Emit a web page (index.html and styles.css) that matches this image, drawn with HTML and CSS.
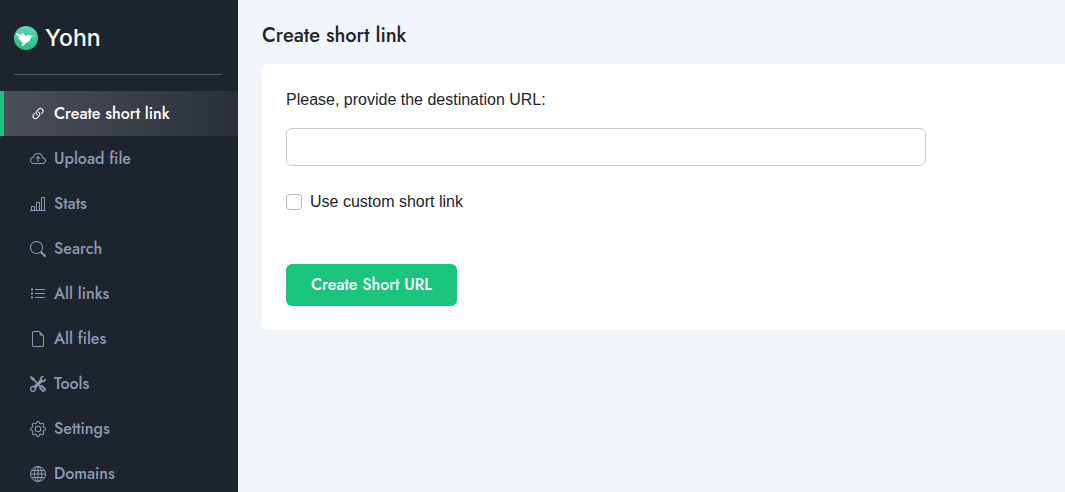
FILE: index.html
```html
<!DOCTYPE html>
<html lang="en">
<head>
    <meta charset="UTF-8">
    <meta name="viewport" content="width=device-width, initial-scale=1">
    <title>Yohn - Create short link</title>
    <link rel="stylesheet" href="styles.css">
</head>
<body>
    <aside class="sidebar">
        <a class="brand" href="#">
            <svg class="brand-logo" viewBox="0 0 24 24" aria-hidden="true">
                <defs>
                    <linearGradient id="logo-bg" x1="0" y1="0" x2="0" y2="1">
                        <stop offset="0" stop-color="#62d2b8"/>
                        <stop offset="1" stop-color="#1bc47d"/>
                    </linearGradient>
                </defs>
                <circle cx="12" cy="12" r="12" fill="url(#logo-bg)"/>
                <path fill="#fff" d="M2 6.8C4.3 8 6.5 8.600 8.500 9.500C7.900 8.500 7.500 7.600 7.600 6.700C9.600 7.600 11.200 9 12.300 10.700C13 9.400 14.200 8.900 15.400 9.200C16.100 9.400 16.500 9.700 17 9.800L22 9.800L17.600 10.500C17 11 16.900 12 16.500 13C15.800 14.900 14.200 16.200 12.300 16.700C11.600 17.500 10.600 18.700 9.300 19.700C8.700 19.500 8 19.400 7.400 19.500C7.900 18.400 8.300 17.200 8.600 16.100C7.300 15.800 6.500 15.300 6 14.600C6.700 14.600 7.200 14.500 7.700 14.200C5.700 13.900 4.500 13 3.900 11.900C4.700 12 5.300 12 6 11.800C3.600 10.800 2.200 9.200 2 6.800Z"/>
            </svg>
            <span>Yohn</span>
        </a>
        <nav class="menu">
            <a class="menu-item active" href="#">
                <svg viewBox="0 0 16 16" aria-hidden="true"><path d="M4.715 6.542 3.343 7.914a3 3 0 1 0 4.243 4.243l1.828-1.829A3 3 0 0 0 8.586 5.500L8 6.086a1 1 0 0 0-.154.199 2 2 0 0 1 .861 3.337L6.880 11.450a2 2 0 1 1-2.830-2.830l.793-.792a4 4 0 0 1-.128-1.287z"/><path d="M6.586 4.672A3 3 0 0 0 7.414 9.500l.775-.776a2 2 0 0 1-.896-3.346L9.120 3.550a2 2 0 1 1 2.830 2.830l-.793.792c.112.420.155.855.128 1.287l1.372-1.372a3 3 0 1 0-4.243-4.243z"/></svg>
                <span>Create short link</span>
            </a>
            <a class="menu-item" href="#">
                <svg viewBox="0 0 16 16" aria-hidden="true"><path d="M7.646 5.146a.5.5 0 0 1 .708 0l2 2a.5.5 0 0 1-.708.708L8.500 6.707V10.500a.5.5 0 0 1-1 0V6.707L6.354 7.854a.5.5 0 1 1-.708-.708z"/><path d="M4.406 3.342A5.530 5.530 0 0 1 8 2c2.690 0 4.923 2 5.166 4.579C14.758 6.804 16 8.137 16 9.773 16 11.569 14.502 13 12.687 13H3.781C1.708 13 0 11.366 0 9.318c0-1.763 1.266-3.223 2.942-3.593.143-.863.698-1.723 1.464-2.383m.653.757c-.757.653-1.153 1.440-1.153 2.056v.448l-.445.049C2.064 6.805 1 7.952 1 9.318 1 10.785 2.230 12 3.781 12h8.906C13.980 12 15 10.988 15 9.773c0-1.216-1.020-2.228-2.313-2.228h-.5v-.5C12.188 4.825 10.328 3 8 3a4.530 4.530 0 0 0-2.941 1.100z"/></svg>
                <span>Upload file</span>
            </a>
            <a class="menu-item" href="#">
                <svg viewBox="0 0 16 16" aria-hidden="true"><path d="M11 2a1 1 0 0 1 1-1h2a1 1 0 0 1 1 1v12h.5a.5.5 0 0 1 0 1H.5a.5.5 0 0 1 0-1H1v-3a1 1 0 0 1 1-1h2a1 1 0 0 1 1 1v3h1V7a1 1 0 0 1 1-1h2a1 1 0 0 1 1 1v7h1zm1 12h2V2h-2zm-3 0V7H7v7zm-5 0v-3H2v3z"/></svg>
                <span>Stats</span>
            </a>
            <a class="menu-item" href="#">
                <svg viewBox="0 0 16 16" aria-hidden="true"><path d="M11.742 10.344a6.500 6.500 0 1 0-1.397 1.398h-.001q.044.060.098.115l3.850 3.850a1 1 0 0 0 1.415-1.414l-3.850-3.850a1 1 0 0 0-.115-.1zM12 6.500a5.500 5.500 0 1 1-11 0 5.500 5.500 0 0 1 11 0"/></svg>
                <span>Search</span>
            </a>
            <a class="menu-item" href="#">
                <svg viewBox="0 0 16 16" aria-hidden="true"><path d="M5.500 3h9a.5.5 0 0 1 0 1h-9a.5.5 0 0 1 0-1zm0 4h9a.5.5 0 0 1 0 1h-9a.5.5 0 0 1 0-1zm0 4h9a.5.5 0 0 1 0 1h-9a.5.5 0 0 1 0-1zM1 2.500h2v2H1zm0 4h2v2H1zm0 4h2v2H1z"/></svg>
                <span>All links</span>
            </a>
            <a class="menu-item" href="#">
                <svg viewBox="0 0 16 16" aria-hidden="true"><path d="M14 4.500V14a2 2 0 0 1-2 2H4a2 2 0 0 1-2-2V2a2 2 0 0 1 2-2h5.500zm-3 0A1.500 1.500 0 0 1 9.500 3V1H4a1 1 0 0 0-1 1v12a1 1 0 0 0 1 1h8a1 1 0 0 0 1-1V4.500z"/></svg>
                <span>All files</span>
            </a>
            <a class="menu-item" href="#">
                <svg class="bold" viewBox="0 0 16 16" aria-hidden="true"><path d="M1 0 0 1l2.200 3.081a1 1 0 0 0 .815.419h.070a1 1 0 0 1 .708.293l2.675 2.675-2.617 2.654A3.003 3.003 0 0 0 0 13a3 3 0 1 0 5.878-.851l2.654-2.617.968.968-.305.914a1 1 0 0 0 .242 1.023l3.270 3.270a.997.997 0 0 0 1.414 0l1.586-1.586a.997.997 0 0 0 0-1.414l-3.270-3.270a1 1 0 0 0-1.023-.242L10.500 9.500l-.960-.960 2.680-2.643A3.005 3.005 0 0 0 16 3q0-.405-.102-.777l-2.140 2.141L12 4l-.364-1.757L13.777.102a3 3 0 0 0-3.675 3.680L7.462 6.460 4.793 3.793a1 1 0 0 1-.293-.707v-.071a1 1 0 0 0-.419-.814zm9.646 10.646a.5.5 0 0 1 .708 0l2.914 2.915a.5.5 0 0 1-.707.707l-2.915-2.914a.5.5 0 0 1 0-.708M3 11l.471.242.529.026.287.445.445.287.026.529L5 13l-.242.471-.026.529-.445.287-.287.445-.529.026L3 15l-.471-.242L2 14.732l-.287-.445L1.268 14l-.026-.529L1 13l.242-.471.026-.529.445-.287.287-.445.529-.026z"/></svg>
                <span>Tools</span>
            </a>
            <a class="menu-item" href="#">
                <svg viewBox="0 0 16 16" aria-hidden="true"><path d="M8 4.754a3.246 3.246 0 1 0 0 6.492 3.246 3.246 0 0 0 0-6.492M5.754 8a2.246 2.246 0 1 1 4.492 0 2.246 2.246 0 0 1-4.492 0"/><path d="M9.796 1.343c-.527-1.790-3.065-1.790-3.592 0l-.094.319a.873.873 0 0 1-1.255.520l-.292-.160c-1.640-.892-3.433.902-2.540 2.541l.159.292a.873.873 0 0 1-.520 1.255l-.319.094c-1.790.527-1.790 3.065 0 3.592l.319.094a.873.873 0 0 1 .520 1.255l-.160.292c-.892 1.640.901 3.434 2.541 2.540l.292-.159a.873.873 0 0 1 1.255.520l.094.319c.527 1.790 3.065 1.790 3.592 0l.094-.319a.873.873 0 0 1 1.255-.520l.292.160c1.640.893 3.434-.902 2.540-2.541l-.159-.292a.873.873 0 0 1 .520-1.255l.319-.094c1.790-.527 1.790-3.065 0-3.592l-.319-.094a.873.873 0 0 1-.520-1.255l.160-.292c.893-1.640-.902-3.433-2.541-2.540l-.292.159a.873.873 0 0 1-1.255-.520zm-2.633.283c.246-.835 1.428-.835 1.674 0l.094.319a1.873 1.873 0 0 0 2.693 1.115l.291-.160c.764-.415 1.600.420 1.184 1.185l-.159.292a1.873 1.873 0 0 0 1.116 2.692l.318.094c.835.246.835 1.428 0 1.674l-.319.094a1.873 1.873 0 0 0-1.115 2.693l.160.291c.415.764-.420 1.600-1.185 1.184l-.291-.159a1.873 1.873 0 0 0-2.693 1.116l-.094.318c-.246.835-1.428.835-1.674 0l-.094-.319a1.873 1.873 0 0 0-2.692-1.115l-.292.160c-.764.415-1.600-.420-1.184-1.185l.159-.291A1.873 1.873 0 0 0 1.945 8.930l-.319-.094c-.835-.246-.835-1.428 0-1.674l.319-.094A1.873 1.873 0 0 0 3.060 4.377l-.160-.292c-.415-.764.420-1.600 1.185-1.184l.292.159a1.873 1.873 0 0 0 2.692-1.115z"/></svg>
                <span>Settings</span>
            </a>
            <a class="menu-item" href="#">
                <svg class="outline" viewBox="0 0 16 16" aria-hidden="true"><circle cx="8" cy="8" r="7.500"/><ellipse cx="8" cy="8" rx="3.800" ry="7.500"/><path d="M8 .5v15M.5 8h15M1.700 4.500h12.600M1.700 11.500h12.600"/></svg>
                <span>Domains</span>
            </a>
        </nav>
    </aside>

    <main class="content">
        <h1>Create short link</h1>
        <form class="card">
            <label class="field-label" for="url">Please, provide the destination URL:</label>
            <input class="field" type="text" id="url" name="url">
            <div class="check">
                <input type="checkbox" id="custom" name="custom">
                <label for="custom">Use custom short link</label>
            </div>
            <button class="btn" type="button">Create Short URL</button>
        </form>
    </main>
</body>
</html>
```

FILE: styles.css
```css
*{margin: 0;padding: 0;box-sizing: border-box;}
a{text-decoration: none;}
body{display: flex;min-height: 100vh;font: 16px/24px "Liberation Sans", Arial, sans-serif;color: #212529;background: #f2f5fa;overflow: hidden;}

/* sidebar */
.sidebar{flex: 0 0 238px;height: 100vh;overflow: hidden;background: #1e242e;font-family: Jost, Lato, sans-serif;}
.brand{display: flex;align-items: center;gap: 7px;height: 75px;margin: 0 16px 16px 14px;padding-top: 2px;border-bottom: 1px solid #555b64;color: #fff;font-family: Inter, sans-serif;font-size: 23px;font-weight: 500;}
.brand-logo{width: 24px;height: 24px;}
.menu-item{display: flex;align-items: center;gap: 8px;height: 45px;padding-left: 26px;border-left: 4px solid transparent;color: #8b9ab4;font-weight: 500;}
.menu-item svg{width: 16px;height: 16px;fill: currentColor;}
.menu-item svg.outline{fill: none;stroke: currentColor;}
.menu-item svg.bold{stroke: currentColor;stroke-width: .4;}
.menu-item.active{border-left-color: #1bc47d;color: #fff;background: linear-gradient(90deg, #4b5058, #2a303a);}

/* content */
.content{flex: 1;min-width: 0;padding: 21px 0 24px 24px;}
h1{margin-bottom: 13px;font: 500 20px/30px Jost, Lato, sans-serif;}
.card{display: flex;flex-direction: column;align-items: flex-start;padding: 24px;background: #fff;border-radius: 6px 0 0 6px;}
.field-label{margin-bottom: 16px;}
.field{width: 100%;max-width: 640px;height: 38px;padding: 6px 12px;border: 1px solid #c2cad4;border-radius: 6px;font: inherit;}
.check{display: flex;align-items: center;gap: 8px;margin: 24px 0 50px;}
.check input{appearance: none;width: 16px;height: 16px;border: 1px solid #b4b8bd;border-radius: 4px;background: #fff;}
.check input:checked{border-color: #1bc47d;background: #1bc47d;}
.btn{height: 42px;padding: 0 25px;border: 0;border-radius: 6px;background: #1bc47d;color: #fff;font: 500 16px/24px Jost, Lato, sans-serif;cursor: pointer;}
```
